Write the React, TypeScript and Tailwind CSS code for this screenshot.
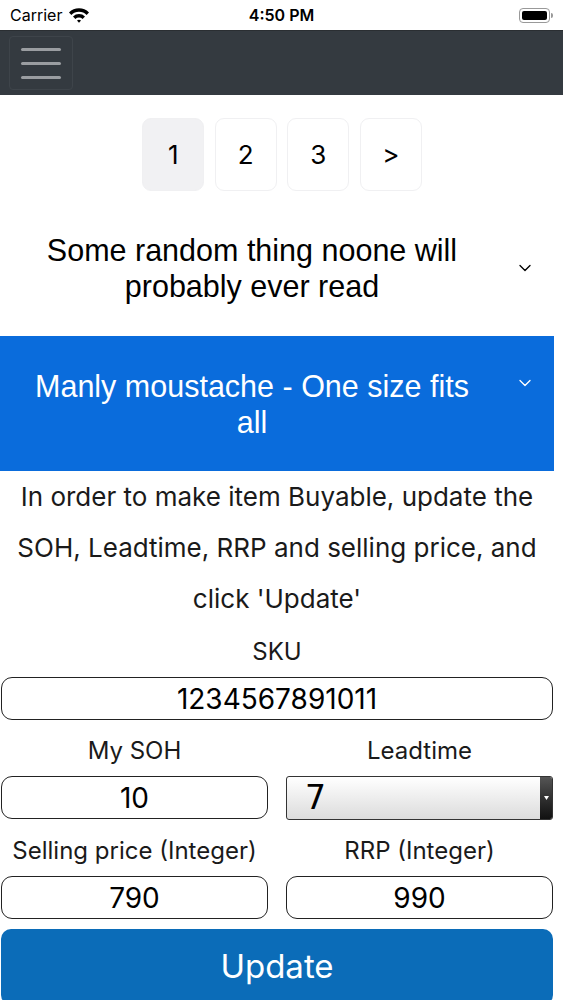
import React from 'react';
import { ChevronDown } from 'lucide-react';

const sf = { fontFamily: 'Inter, "Liberation Sans", sans-serif' };
const helv = { fontFamily: '"Liberation Sans", Arial, sans-serif' };

const StatusBar: React.FC = () => (
  <div className="h-[30px] flex items-center justify-between px-[10px] bg-white text-black" style={sf}>
    <div className="flex items-center gap-[6px] w-[120px]">
      <span className="text-[16px]">Carrier</span>
      <svg width="22" height="16" viewBox="0 0 22 16">
        <path d="M1 5.5 A14 14 0 0 1 21 5.5 L18.6 8 A10.6 10.6 0 0 0 3.4 8 Z" fill="#000" />
        <path d="M5 9.6 A8.5 8.5 0 0 1 17 9.6 L14.6 12 A5.2 5.2 0 0 0 7.4 12 Z" fill="#000" />
        <path d="M9 13.6 A3 3 0 0 1 13 13.6 L11 15.8 Z" fill="#000" />
      </svg>
    </div>
    <span className="text-[16px] font-semibold">4:50 PM</span>
    <div className="w-[120px] flex justify-end">
      <div className="flex items-center">
        <div className="w-[31px] h-[15px] rounded-[4px] border border-[#999] p-[2px]">
          <div className="w-full h-full rounded-[2px] bg-black" />
        </div>
        <div className="w-[2px] h-[5px] bg-[#999] rounded-r-sm ml-px" />
      </div>
    </div>
  </div>
);

const NavBar: React.FC = () => (
  <div className="h-[65px] bg-[#343a40] flex items-center pl-[9px] border-t border-[#2a2e32]">
    <button className="w-[64px] h-[54px] border border-[#3e444a] rounded-[4px] flex flex-col items-center justify-center gap-[11px]">
      <span className="block w-[40px] h-[3px] rounded-full bg-[#9a9da1]" />
      <span className="block w-[40px] h-[3px] rounded-full bg-[#9a9da1]" />
      <span className="block w-[40px] h-[3px] rounded-full bg-[#9a9da1]" />
    </button>
  </div>
);

const Pagination: React.FC = () => {
  const pages = ['1', '2', '3', '>'];
  return (
    <div className="flex justify-center gap-[10.5px] pt-[23px] pl-[10px]" style={sf}>
      {pages.map((p, i) => (
        <div
          key={p}
          className={`w-[62px] h-[73px] rounded-[9px] border border-[#f0f0f2] flex items-center justify-center text-[26px] text-black ${i === 0 ? 'bg-[#f1f1f3]' : 'bg-white'}`}
        >
          {p}
        </div>
      ))}
    </div>
  );
};

const Label: React.FC<{ children: React.ReactNode }> = ({ children }) => (
  <span className="h-[30px] text-[24px] leading-[30px] text-[#1a1a1a] mb-[10px]">{children}</span>
);

const Field: React.FC<{ label: string; value: string }> = ({ label, value }) => (
  <div className="flex flex-col items-center">
    <Label>{label}</Label>
    <div className="w-full h-[43px] rounded-[11px] border-[1.5px] border-[#222] flex items-center justify-center text-[28px] text-black">
      {value}
    </div>
  </div>
);

export default function App() {
  return (
    <div className="w-[563px] bg-white overflow-hidden">
      <StatusBar />
      <NavBar />
      <div className="w-[554px]">
        <Pagination />

        <div className="flex items-center h-[145px] pt-[8px]" style={helv}>
          <div className="w-[468px] ml-[18px] text-center text-[30.5px] leading-[36px] text-black">
            Some random thing noone will probably ever read
          </div>
          <ChevronDown className="w-[20px] h-[20px] text-black ml-auto mr-[19px] shrink-0" strokeWidth={1.6} />
        </div>

        <div className="flex items-center h-[135px] bg-[#0a6cdc]" style={helv}>
          <div className="w-[468px] ml-[18px] text-center text-[30.5px] leading-[36px] text-white">
            Manly moustache - One size fits all
          </div>
          <ChevronDown className="w-[20px] h-[20px] text-white ml-auto mr-[19px] self-start mt-[37px] shrink-0" strokeWidth={1.6} />
        </div>

        <div className="px-[1px] pb-[10px]" style={sf}>
          <p className="text-center text-[26px] leading-[51px] text-[#1a1a1a] mb-[13px]">
            In order to make item Buyable, update the SOH, Leadtime, RRP and selling price, and click 'Update'
          </p>
          <Field label="SKU" value="1234567891011" />
          <div className="grid grid-cols-2 gap-[18px] mt-[16px]">
            <Field label="My SOH" value="10" />
            <div className="flex flex-col items-center">
              <Label>Leadtime</Label>
              <div className="w-full h-[44px] rounded-[3px] border border-[#333] flex overflow-hidden bg-gradient-to-b from-white to-[#dcdcdc]">
                <div className="flex-1 flex items-center pl-[18px] text-[33px] text-black" style={{ fontFamily: '"DejaVu Sans", sans-serif' }}>
                  7
                </div>
                <div className="w-[12px] bg-gradient-to-b from-[#555] to-[#111] flex items-center justify-center">
                  <svg width="5" height="4" viewBox="0 0 5 4">
                    <path d="M0 0 H5 L2.5 4 Z" fill="#fff" />
                  </svg>
                </div>
              </div>
            </div>
          </div>
          <div className="grid grid-cols-2 gap-[18px] mt-[16px]">
            <Field label="Selling price (Integer)" value="790" />
            <Field label="RRP (Integer)" value="990" />
          </div>
          <button className="mt-[10px] w-full h-[76px] rounded-[10px] bg-[#0b6cb8] text-white text-[33px] flex items-center justify-center">
            Update
          </button>
        </div>
      </div>
    </div>
  );
}
